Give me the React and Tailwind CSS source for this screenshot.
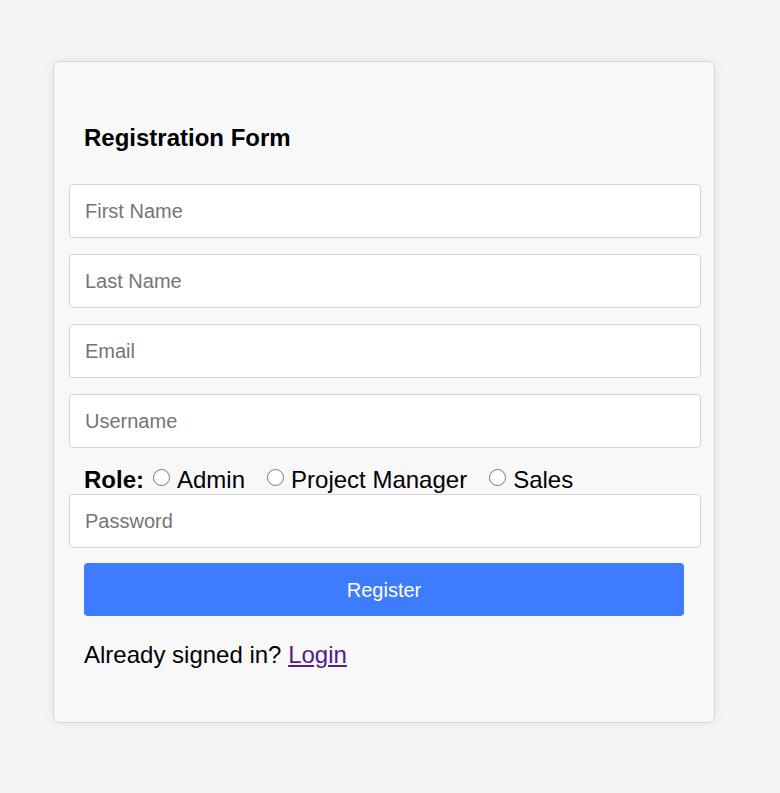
/**
 * Registration form card
 */

const fields = ['First Name', 'Last Name', 'Email', 'Username'];
const roles = ['Admin', 'Project Manager', 'Sales'];

const Field = ({ placeholder, type = 'text' }) => (
  <input
    type={type}
    placeholder={placeholder}
    className="block w-[632px] h-[54px] px-[15px] rounded-[4px] border border-[#d4d4d4] bg-white text-[20px] text-black placeholder:text-[#757575] outline-none"
  />
);

const Radio = ({ label }) => (
  <label className="flex items-end">
    <span className="mb-[7px] mr-[7px] w-[17px] h-[17px] rounded-full border border-[#767676] bg-white" />
    <span>{label}</span>
  </label>
);

const App = () => {
  return (
    <div
      className="min-h-screen bg-[#f3f4f6] pt-[61px] pb-[70px]"
      style={{ fontFamily: '"Liberation Sans", Arial, sans-serif' }}
    >
      <div className="ml-[53px] w-[662px] rounded-[7px] border border-[#d6d6d6] bg-[#f8f8f8] shadow-[0_0_12px_rgba(0,0,0,0.06)] pt-[62px] pb-[54px]">
        {/* Heading */}
        <h2 className="ml-[30px] text-[24px] leading-[28px] font-bold text-black">Registration Form</h2>

        {/* Inputs */}
        <div className="mt-[32px] ml-[15px] flex flex-col gap-[16px]">
          {fields.map((f) => (
            <Field key={f} placeholder={f} />
          ))}
        </div>

        {/* Role */}
        <div className="ml-[30px] h-[45px] mb-[1px] flex items-end text-[24px] leading-[27px] text-black">
          <span className="font-bold mr-[9px]">Role:</span>
          <div className="flex items-end gap-[22px]">
            {roles.map((r) => (
              <Radio key={r} label={r} />
            ))}
          </div>
        </div>

        <div className="ml-[15px]">
          <Field placeholder="Password" type="password" />
        </div>

        <button className="mt-[15px] ml-[30px] w-[600px] h-[53px] rounded-[4px] bg-[#3d7bff] text-white text-[20px]">
          Register
        </button>

        <p className="mt-[26px] ml-[30px] text-[24px] leading-[26px] text-black">
          Already signed in?{' '}
          <a href="#" className="text-[#551a8b] underline">Login</a>
        </p>
      </div>
    </div>
  );
};

export default App;
